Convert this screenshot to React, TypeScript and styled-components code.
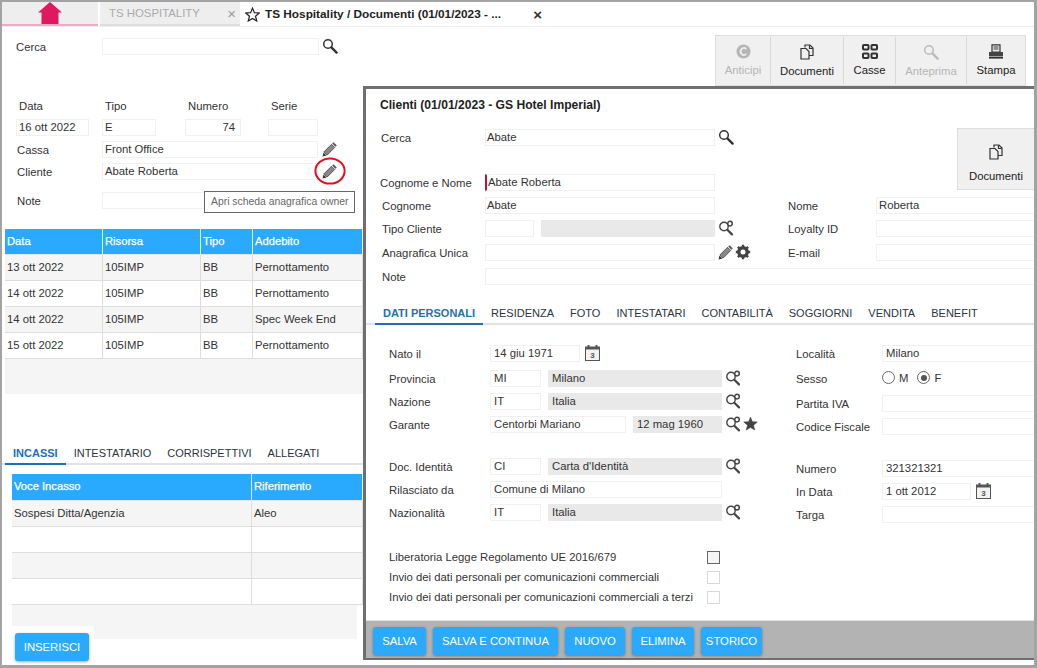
import React from "react";
import styled, { createGlobalStyle } from "styled-components";

const GlobalStyle = createGlobalStyle`
  html, body { margin: 0; padding: 0; background: #fff; }
  body { font-family: "Liberation Sans", Arial, sans-serif; font-size: 11.3px; color: #333; }
`;

const Frame = styled.div`
  position: relative;
  box-sizing: border-box;
  width: 1037px;
  height: 668px;
  overflow: hidden;
  background: #fff;
  border-style: solid;
  border-color: #a3a3a3;
  border-width: 2px 3px 3px 2px;
`;

const TabStrip = styled.div`
  display: flex;
  height: 24px;
  border-bottom: 1px solid #eee;
`;

const HomeTab = styled.div`
  box-sizing: border-box;
  width: 96px;
  height: 24px;
  display: flex;
  justify-content: center;
  background: #eee;
  border-bottom: 2px solid #f0a9c5;
`;

const AppTab = styled.div`
  box-sizing: border-box;
  width: 140px;
  height: 24px;
  margin-left: 2px;
  padding-left: 9px;
  display: flex;
  align-items: center;
  background: #eee;
  border-bottom: 2px solid #ddd;
  color: #aaa;
  font-size: 11.4px;
`;

const TabClose = styled.span<{ $dark?: boolean }>`
  margin-left: auto;
  margin-right: ${(p) => (p.$dark ? "0" : "4px")};
  font-size: 15px;
  line-height: 15px;
  color: ${(p) => (p.$dark ? "#333" : "#999")};
`;

const ActiveTab = styled.div`
  box-sizing: border-box;
  width: 302px;
  height: 24px;
  padding-left: 5px;
  display: flex;
  align-items: center;
  gap: 5px;
  font-size: 11.8px;
  font-weight: bold;
  color: #222;
`;

const TopArea = styled.div`
  display: flex;
  justify-content: space-between;
  align-items: flex-start;
  height: 59px;
`;

const SearchRow = styled.div`
  display: flex;
  align-items: flex-start;
  margin-top: 11px;
  padding-left: 14px;
`;

const Toolbar = styled.div`
  display: flex;
  height: 47px;
  margin-top: 8px;
  margin-right: 8px;
  padding: 1px 0;
  background: #f0f0f0;
  border: 1px solid #ddd;
`;

const ToolButton = styled.div<{ $w: number; $off?: boolean; $last?: boolean }>`
  box-sizing: border-box;
  width: ${(p) => p.$w}px;
  display: flex;
  flex-direction: column;
  align-items: center;
  gap: 4px;
  padding-top: 7px;
  border-right: ${(p) => (p.$last ? "none" : "1px solid #d8d8d8")};
  color: ${(p) => (p.$off ? "#b5b5b5" : "#222")};
  line-height: 14px;
`;

const LeftPane = styled.div`
  width: 361px;
`;

const HeadRow = styled.div`
  display: flex;
  height: 16px;
  margin-top: 12px;
  padding-left: 17px;
  line-height: 16px;
  color: #333;
`;

const HeadLabel = styled.span<{ $w: number }>`
  width: ${(p) => p.$w}px;
`;

const Row = styled.div<{ $mt?: number; $pl?: number }>`
  display: flex;
  align-items: flex-start;
  margin-top: ${(p) => p.$mt ?? 0}px;
  padding-left: ${(p) => p.$pl ?? 0}px;
`;

const Label = styled.span<{ $w: number }>`
  flex: none;
  width: ${(p) => p.$w}px;
  height: 17px;
  line-height: 18px;
  color: #333;
  white-space: nowrap;
`;

const Field = styled.div<{ $w: number; $gray?: boolean; $ml?: number; $right?: boolean; $req?: boolean; $inset?: number }>`
  flex: none;
  box-sizing: border-box;
  width: ${(p) => p.$w}px;
  height: 17px;
  margin-left: ${(p) => p.$ml ?? 0}px;
  padding: 0 ${(p) => (p.$right ? "5px" : "2px")} 0 ${(p) => p.$inset ?? (p.$req ? 1 : 2)}px;
  overflow: hidden;
  white-space: nowrap;
  line-height: 14px;
  text-align: ${(p) => (p.$right ? "right" : "left")};
  color: #333;
  background: ${(p) => (p.$gray ? "#e9e9e9" : "#fff")};
  border: 1px solid ${(p) => (p.$gray ? "#e9e9e9" : "#f0f0f0")};
  border-left: ${(p) => (p.$req ? "2px solid #b5173a" : undefined)};
`;

const IconSlot = styled.span<{ $ml?: number }>`
  position: relative;
  flex: none;
  display: inline-flex;
  margin-left: ${(p) => p.$ml ?? 3}px;
  color: #444;
`;

const Ring = styled.svg`
  position: absolute;
  left: -8px;
  top: -7px;
`;

const Tooltip = styled.div`
  position: absolute;
  left: 202px;
  top: 189px;
  box-sizing: border-box;
  width: 151px;
  height: 22px;
  padding-left: 6px;
  background: #fff;
  border: 1px solid #666;
  font-size: 10.4px;
  line-height: 20px;
  color: #666;
  white-space: nowrap;
`;

const Grid = styled.div<{ $cols: string; $ml?: number; $mt?: number; $w?: number }>`
  display: grid;
  grid-template-columns: ${(p) => p.$cols};
  width: ${(p) => p.$w ?? 358}px;
  margin-left: ${(p) => p.$ml ?? 3}px;
  margin-top: ${(p) => p.$mt ?? 0}px;
`;

const HeadCell = styled.div<{ $h?: number }>`
  height: ${(p) => p.$h ?? 25}px;
  padding-left: 2px;
  line-height: 25px;
  color: #fff;
  font-size: 11.2px;
  -webkit-text-stroke: 0.25px #fff;
  background: #29aaff;
  border-right: 1px solid #dff2ff;
  border-bottom: 1px solid #e5e5e5;
`;

const BodyCell = styled.div<{ $odd: boolean }>`
  box-sizing: border-box;
  height: 26px;
  padding-left: 2px;
  line-height: 25px;
  color: #333;
  background: ${(p) => (p.$odd ? "#f5f5f5" : "#fff")};
  border-right: 1px solid #ddd;
  border-bottom: 1px solid #ddd;
`;

const GridFooter = styled.div<{ $h: number; $ml: number; $w: number }>`
  height: ${(p) => p.$h}px;
  width: ${(p) => p.$w}px;
  margin-left: ${(p) => p.$ml}px;
  background: #f5f5f5;
`;

const Tabs = styled.div<{ $mt: number; $ml: number; $gap: number; $w: number }>`
  display: flex;
  gap: ${(p) => p.$gap}px;
  box-sizing: border-box;
  width: ${(p) => p.$w}px;
  height: 22px;
  margin-top: ${(p) => p.$mt}px;
  padding-left: ${(p) => p.$ml}px;
  border-bottom: 2px solid #e2e2e2;
`;

const TabItem = styled.div<{ $on?: boolean; $pad?: number }>`
  position: relative;
  font-size: 11px;
  line-height: 20px;
  color: ${(p) => (p.$on ? "#1f6fb2" : "#2b3440")};
  font-weight: ${(p) => (p.$on ? "bold" : "normal")};
  white-space: nowrap;
  &::after {
    content: "";
    display: ${(p) => (p.$on ? "block" : "none")};
    position: absolute;
    left: -${(p) => p.$pad ?? 8}px;
    right: -${(p) => p.$pad ?? 8}px;
    bottom: -2px;
    height: 2px;
    background: #1f6fb2;
  }
`;

const Patch = styled.div`
  position: absolute;
  left: 0;
  top: 624px;
  width: 92px;
  height: 40px;
  background: #fff;
`;

const BlueButton = styled.div<{ $w: number }>`
  box-sizing: border-box;
  width: ${(p) => p.$w}px;
  height: 28px;
  line-height: 28px;
  text-align: center;
  color: #fff;
  background: #29aaff;
  border-radius: 3px;
  box-shadow: 0 1px 3px rgba(0, 0, 0, 0.35);
  white-space: nowrap;
`;

const InsertButton = styled(BlueButton)`
  position: absolute;
  left: 13px;
  top: 631px;
`;

const Dialog = styled.div`
  position: absolute;
  left: 361px;
  top: 84px;
  box-sizing: border-box;
  width: 671px;
  height: 574px;
  display: flex;
  flex-direction: column;
  background: #fff;
  border: 3px solid #6f6f6f;
  border-right: none;
  border-bottom-width: 2px;
`;

const DialogBody = styled.div`
  flex: 1;
  overflow: hidden;
`;

const DialogTitle = styled.div`
  margin: 9px 0 0 14px;
  font-size: 12.1px;
  line-height: 14px;
  font-weight: bold;
  color: #222;
`;

const HeadBlock = styled.div`
  display: flex;
  justify-content: space-between;
  margin-top: 16px;
`;

const DocButton = styled.div`
  box-sizing: border-box;
  width: 77px;
  height: 62px;
  padding-top: 15px;
  display: flex;
  flex-direction: column;
  align-items: center;
  gap: 10px;
  background: #f0f0f0;
  border: 1px solid #ddd;
  border-right: none;
  color: #222;
`;

const Split = styled.div<{ $left: number }>`
  display: grid;
  grid-template-columns: ${(p) => p.$left}px 1fr;
`;

const Stack = styled.div<{ $mt?: number }>`
  display: flex;
  flex-direction: column;
  margin-top: ${(p) => p.$mt ?? 0}px;
`;

const Sex = styled.div`
  display: flex;
  align-items: center;
  height: 15px;
  gap: 4px;
  color: #333;
`;

const Radio = styled.span<{ $on?: boolean }>`
  position: relative;
  box-sizing: border-box;
  width: 13px;
  height: 13px;
  margin-left: ${(p) => (p.$on ? "5px" : "0")};
  border: 1px solid #666;
  border-radius: 50%;
  background: #fff;
  &::after {
    content: "";
    display: ${(p) => (p.$on ? "block" : "none")};
    position: absolute;
    left: 2.5px;
    top: 2.5px;
    width: 6px;
    height: 6px;
    border-radius: 50%;
    background: #555;
  }
`;

const CheckRow = styled.div`
  display: flex;
  align-items: center;
  height: 20px;
  padding-left: 23px;
`;

const CheckLabel = styled.span`
  width: 318px;
  color: #333;
  white-space: nowrap;
`;

const CheckBox = styled.span<{ $on?: boolean }>`
  box-sizing: border-box;
  width: 13px;
  height: 13px;
  background: ${(p) => (p.$on ? "#f5f5f5" : "#fff")};
  border: 1px solid ${(p) => (p.$on ? "#666" : "#d8d8d8")};
`;

const DialogFooter = styled.div`
  flex: none;
  box-sizing: border-box;
  height: 38px;
  padding: 6px 0 0 7px;
  display: flex;
  gap: 7px;
  background: #b3b3b3;
  border-top: 1px solid #e2e2e2;
`;

const SearchIcon = ({ color = "#333", size = 16 }: { color?: string; size?: number }) => (
  <svg width={size} height={size} viewBox="0 0 16 16" fill="none">
    <circle cx="6" cy="6" r="4.3" stroke={color} strokeWidth="1.5" />
    <path d="M9.4 9.4 14.6 14.6" stroke={color} strokeWidth="2.4" strokeLinecap="round" />
  </svg>
);

const KeyIcon = () => (
  <svg width="16" height="16" viewBox="0 0 16 16" fill="none">
    <circle cx="6" cy="6.5" r="4.2" stroke="#444" strokeWidth="1.4" />
    <path d="M9.3 9.8 14 14.4" stroke="#444" strokeWidth="2.2" strokeLinecap="round" />
    <circle cx="12" cy="3.6" r="2.3" fill="#fff" stroke="#444" strokeWidth="1.5" />
  </svg>
);

const PencilIcon = () => (
  <svg width="16" height="16" viewBox="0 0 16 16">
    <path d="M11.6 1.2 14.8 4.4 13.4 5.8 10.2 2.6Z" fill="#555" />
    <path d="M9.5 3.3 12.7 6.5 5 14.2 1.8 11Z" fill="#888" stroke="#333" strokeWidth="0.7" />
    <path d="M1.4 11.6 4.4 14.6 .6 15.4Z" fill="#333" />
  </svg>
);

const GearIcon = () => (
  <svg width="16" height="16" viewBox="0 0 16 16">
    <circle cx="8" cy="8" r="4.2" fill="none" stroke="#444" strokeWidth="3.4" />
    <path
      d="M8 0.8v3M8 12.2v3M0.8 8h3M12.2 8h3M2.9 2.9 5 5M11 11l2.1 2.1M13.1 2.9 11 5M5 11l-2.1 2.1"
      stroke="#444"
      strokeWidth="2.4"
    />
  </svg>
);

const CalendarIcon = () => (
  <svg width="15" height="16" viewBox="0 0 15 16">
    <rect x="0.5" y="2" width="14" height="13.5" fill="#f2f2f2" stroke="#555" strokeWidth="1" />
    <rect x="0.5" y="2" width="14" height="2.5" fill="#555" />
    <rect x="2.5" y="0" width="2" height="3" fill="#555" />
    <rect x="10.5" y="0" width="2" height="3" fill="#555" />
    <text x="7.5" y="13" textAnchor="middle" fontSize="8" fontWeight="bold" fontFamily="Liberation Sans" fill="#555">
      3
    </text>
  </svg>
);

const StarIcon = ({ solid }: { solid?: boolean }) => (
  <svg width="15" height="15" viewBox="0 0 16 16">
    <path
      d="M8 1.2 10 6 15.2 6.4 11.2 9.8 12.5 14.9 8 12.2 3.5 14.9 4.8 9.8 .8 6.4 6 6Z"
      fill={solid ? "#444" : "none"}
      stroke={solid ? "#444" : "#222"}
      strokeWidth={solid ? 0.6 : 1.3}
    />
  </svg>
);

const HomeIcon = () => (
  <svg width="26" height="22" viewBox="0 0 26 22">
    <path d="M13 0 25 10.5H21.5V22H4.5V10.5H1Z" fill="#e0195f" />
  </svg>
);

const DocsIcon = ({ color = "#333" }: { color?: string }) => (
  <svg width="14" height="16" viewBox="0 0 14 16" fill="none" stroke={color} strokeWidth="1.2">
    <path d="M5 3.5V1H10L13 4V11.5H9" />
    <path d="M1 4.5H6L9 7.5V15H1Z" fill="#f0f0f0" />
    <path d="M9.5 1.2V4.5H12.8" />
  </svg>
);

const CasseIcon = () => (
  <svg width="16" height="15" viewBox="0 0 16 15" fill="none" stroke="#333" strokeWidth="2">
    <rect x="1" y="1" width="5.5" height="4.5" rx="0.8" />
    <rect x="9.5" y="1" width="5.5" height="4.5" rx="0.8" />
    <rect x="1" y="9.5" width="5.5" height="4.5" rx="0.8" />
    <rect x="9.5" y="9.5" width="5.5" height="4.5" rx="0.8" />
  </svg>
);

const PrinterIcon = () => (
  <svg width="16" height="15" viewBox="0 0 16 15">
    <path d="M4 .8H12V8H4Z" fill="#f0f0f0" stroke="#333" strokeWidth="1.2" />
    <path d="M5.5 3H10.5M5.5 5H10.5" stroke="#333" strokeWidth="1" />
    <rect x="1" y="8" width="14" height="4" fill="#444" />
    <rect x="1" y="12.6" width="14" height="2" fill="#333" />
  </svg>
);

const CoinIcon = () => (
  <svg width="15" height="15" viewBox="0 0 16 16">
    <circle cx="8" cy="8" r="7.5" fill="#b5b5b5" />
    <path d="M11 5.4A3.6 3.6 0 1 0 11 10.6" fill="none" stroke="#f0f0f0" strokeWidth="1.8" />
  </svg>
);

const columns = "98px 98px 52px 1fr";
const documentRows = [
  ["13 ott 2022", "105IMP", "BB", "Pernottamento"],
  ["14 ott 2022", "105IMP", "BB", "Pernottamento"],
  ["14 ott 2022", "105IMP", "BB", "Spec Week End"],
  ["15 ott 2022", "105IMP", "BB", "Pernottamento"],
];
const paymentRows = [["Sospesi Ditta/Agenzia", "Aleo"], ["", ""], ["", ""], ["", ""]];

const Key = () => (
  <IconSlot>
    <KeyIcon />
  </IconSlot>
);

export default function App() {
  return (
    <>
      <GlobalStyle />
      <Frame>
        <TabStrip>
          <HomeTab>
            <HomeIcon />
          </HomeTab>
          <AppTab>
            TS HOSPITALITY
            <TabClose>×</TabClose>
          </AppTab>
          <ActiveTab>
            <StarIcon />
            TS Hospitality / Documenti (01/01/2023 - ...
            <TabClose $dark>×</TabClose>
          </ActiveTab>
        </TabStrip>

        <TopArea>
          <SearchRow>
            <Label $w={86}>Cerca</Label>
            <Field $w={217} />
            <IconSlot>
              <SearchIcon />
            </IconSlot>
          </SearchRow>
          <Toolbar>
            <ToolButton $w={55} $off>
              <CoinIcon />
              Anticipi
            </ToolButton>
            <ToolButton $w={73}>
              <DocsIcon />
              Documenti
            </ToolButton>
            <ToolButton $w={52}>
              <CasseIcon />
              Casse
            </ToolButton>
            <ToolButton $w={71} $off>
              <SearchIcon color="#bbb" />
              Anteprima
            </ToolButton>
            <ToolButton $w={58} $last>
              <PrinterIcon />
              Stampa
            </ToolButton>
          </Toolbar>
        </TopArea>

        <LeftPane>
          <HeadRow>
            <HeadLabel $w={86}>Data</HeadLabel>
            <HeadLabel $w={83}>Tipo</HeadLabel>
            <HeadLabel $w={83}>Numero</HeadLabel>
            <HeadLabel $w={40}>Serie</HeadLabel>
          </HeadRow>
          <Row $mt={5} $pl={14}>
            <Field $w={73}>16 ott 2022</Field>
            <Field $w={54} $ml={13}>E</Field>
            <Field $w={56} $ml={29} $right>74</Field>
            <Field $w={50} $ml={27} />
          </Row>
          <Row $mt={5} $pl={15}>
            <Label $w={85}>Cassa</Label>
            <Field $w={216}>Front Office</Field>
            <IconSlot $ml={4}>
              <PencilIcon />
            </IconSlot>
          </Row>
          <Row $mt={5} $pl={15}>
            <Label $w={85}>Cliente</Label>
            <Field $w={216}>Abate Roberta</Field>
            <IconSlot $ml={4}>
              <PencilIcon />
              <Ring width="32" height="30" viewBox="0 0 32 30" fill="none">
                <ellipse cx="16" cy="15" rx="14.6" ry="12.6" stroke="#e0101c" strokeWidth="2" />
              </Ring>
            </IconSlot>
          </Row>
          <Row $mt={12} $pl={15}>
            <Label $w={85}>Note</Label>
            <Field $w={216} />
          </Row>

          <Grid $cols={columns} $mt={20}>
            {["Data", "Risorsa", "Tipo", "Addebito"].map((title) => (
              <HeadCell key={title}>{title}</HeadCell>
            ))}
            {documentRows.map((row, i) =>
              row.map((text, j) => (
                <BodyCell key={`${i}-${j}`} $odd={i % 2 === 0}>
                  {text}
                </BodyCell>
              )),
            )}
          </Grid>
          <GridFooter $h={35} $ml={3} $w={358} />

          <Tabs $mt={49} $ml={11} $gap={16} $w={361}>
            <TabItem $on>INCASSI</TabItem>
            <TabItem>INTESTATARIO</TabItem>
            <TabItem>CORRISPETTIVI</TabItem>
            <TabItem>ALLEGATI</TabItem>
          </Tabs>

          <Grid $cols="240px 1fr" $ml={10} $mt={9} $w={351}>
            <HeadCell $h={26}>Voce Incasso</HeadCell>
            <HeadCell $h={26}>Riferimento</HeadCell>
            {paymentRows.map((row, i) =>
              row.map((text, j) => (
                <BodyCell key={`${i}-${j}`} $odd={i % 2 === 0}>
                  {text}
                </BodyCell>
              )),
            )}
          </Grid>
          <GridFooter $h={34} $ml={10} $w={345} />
        </LeftPane>

        <Patch />
        <InsertButton $w={74}>INSERISCI</InsertButton>

        <Tooltip>Apri scheda anagrafica owner</Tooltip>

        <Dialog>
          <DialogBody>
            <DialogTitle>Clienti (01/01/2023 - GS Hotel Imperial)</DialogTitle>
            <HeadBlock>
              <Stack>
                <Row $mt={1} $pl={15}>
                  <Label $w={104}>Cerca</Label>
                  <Field $w={230} $inset={1}>Abate</Field>
                  <IconSlot>
                    <SearchIcon />
                  </IconSlot>
                </Row>
                <Row $mt={28} $pl={14}>
                  <Label $w={105}>Cognome e Nome</Label>
                  <Field $w={230} $req>Abate Roberta</Field>
                </Row>
              </Stack>
              <DocButton>
                <DocsIcon />
                Documenti
              </DocButton>
            </HeadBlock>

            <Split $left={422}>
              <Stack>
                <Row $mt={6} $pl={16}>
                  <Label $w={103}>Cognome</Label>
                  <Field $w={230} $inset={1}>Abate</Field>
                </Row>
                <Row $mt={6} $pl={16}>
                  <Label $w={103}>Tipo Cliente</Label>
                  <Field $w={49} />
                  <Field $w={174} $ml={7} $gray />
                  <Key />
                </Row>
                <Row $mt={7} $pl={16}>
                  <Label $w={103}>Anagrafica Unica</Label>
                  <Field $w={230} />
                  <IconSlot>
                    <PencilIcon />
                  </IconSlot>
                  <IconSlot $ml={1}>
                    <GearIcon />
                  </IconSlot>
                </Row>
              </Stack>
              <Stack>
                <Row $mt={6}>
                  <Label $w={88}>Nome</Label>
                  <Field $w={160}>Roberta</Field>
                </Row>
                <Row $mt={6}>
                  <Label $w={88}>Loyalty ID</Label>
                  <Field $w={160} />
                </Row>
                <Row $mt={7}>
                  <Label $w={88}>E-mail</Label>
                  <Field $w={160} />
                </Row>
              </Stack>
            </Split>
            <Row $mt={7} $pl={16}>
              <Label $w={103}>Note</Label>
              <Field $w={550} />
            </Row>

            <Tabs $mt={18} $ml={17} $gap={16} $w={669}>
              <TabItem $on>DATI PERSONALI</TabItem>
              <TabItem>RESIDENZA</TabItem>
              <TabItem>FOTO</TabItem>
              <TabItem>INTESTATARI</TabItem>
              <TabItem>CONTABILITÀ</TabItem>
              <TabItem>SOGGIORNI</TabItem>
              <TabItem>VENDITA</TabItem>
              <TabItem>BENEFIT</TabItem>
            </Tabs>

            <Split $left={430}>
              <Stack>
                <Row $mt={20} $pl={23}>
                  <Label $w={101}>Nato il</Label>
                  <Field $w={90} $inset={3}>14 giu 1971</Field>
                  <IconSlot $ml={5}>
                    <CalendarIcon />
                  </IconSlot>
                </Row>
                <Row $mt={8} $pl={23}>
                  <Label $w={101}>Provincia</Label>
                  <Field $w={51} $inset={3}>MI</Field>
                  <Field $w={174} $ml={7} $gray $inset={3}>Milano</Field>
                  <Key />
                </Row>
                <Row $mt={6} $pl={23}>
                  <Label $w={101}>Nazione</Label>
                  <Field $w={51} $inset={3}>IT</Field>
                  <Field $w={174} $ml={7} $gray $inset={3}>Italia</Field>
                  <Key />
                </Row>
                <Row $mt={6} $pl={23}>
                  <Label $w={101}>Garante</Label>
                  <Field $w={136} $inset={3}>Centorbi Mariano</Field>
                  <Field $w={89} $ml={7} $gray $inset={3}>12 mag 1960</Field>
                  <Key />
                  <IconSlot $ml={2}>
                    <StarIcon solid />
                  </IconSlot>
                </Row>
                <Row $mt={25} $pl={23}>
                  <Label $w={101}>Doc. Identità</Label>
                  <Field $w={51} $inset={3}>CI</Field>
                  <Field $w={174} $ml={7} $gray $inset={3}>Carta d'Identità</Field>
                  <Key />
                </Row>
                <Row $mt={6} $pl={23}>
                  <Label $w={101}>Rilasciato da</Label>
                  <Field $w={232} $inset={3}>Comune di Milano</Field>
                </Row>
                <Row $mt={6} $pl={23}>
                  <Label $w={101}>Nazionalità</Label>
                  <Field $w={51} $inset={3}>IT</Field>
                  <Field $w={174} $ml={7} $gray $inset={3}>Italia</Field>
                  <Key />
                </Row>
              </Stack>
              <Stack>
                <Row $mt={20}>
                  <Label $w={86}>Località</Label>
                  <Field $w={153} $inset={3}>Milano</Field>
                </Row>
                <Row $mt={8}>
                  <Label $w={86}>Sesso</Label>
                  <Sex>
                    <Radio /> M <Radio $on /> F
                  </Sex>
                </Row>
                <Row $mt={8}>
                  <Label $w={86}>Partita IVA</Label>
                  <Field $w={153} />
                </Row>
                <Row $mt={6}>
                  <Label $w={86}>Codice Fiscale</Label>
                  <Field $w={153} />
                </Row>
                <Row $mt={25}>
                  <Label $w={86}>Numero</Label>
                  <Field $w={153} $inset={3}>321321321</Field>
                </Row>
                <Row $mt={6}>
                  <Label $w={86}>In Data</Label>
                  <Field $w={89} $inset={3}>1 ott 2012</Field>
                  <IconSlot $ml={5}>
                    <CalendarIcon />
                  </IconSlot>
                </Row>
                <Row $mt={6}>
                  <Label $w={86}>Targa</Label>
                  <Field $w={153} />
                </Row>
              </Stack>
            </Split>

            <Stack $mt={24}>
              <CheckRow>
                <CheckLabel>Liberatoria Legge Regolamento UE 2016/679</CheckLabel>
                <CheckBox $on />
              </CheckRow>
              <CheckRow>
                <CheckLabel>Invio dei dati personali per comunicazioni commerciali</CheckLabel>
                <CheckBox />
              </CheckRow>
              <CheckRow>
                <CheckLabel>Invio dei dati personali per comunicazioni commerciali a terzi</CheckLabel>
                <CheckBox />
              </CheckRow>
            </Stack>
          </DialogBody>
          <DialogFooter>
            <BlueButton $w={53}>SALVA</BlueButton>
            <BlueButton $w={125}>SALVA E CONTINUA</BlueButton>
            <BlueButton $w={60}>NUOVO</BlueButton>
            <BlueButton $w={62}>ELIMINA</BlueButton>
            <BlueButton $w={61}>STORICO</BlueButton>
          </DialogFooter>
        </Dialog>
      </Frame>
    </>
  );
}
